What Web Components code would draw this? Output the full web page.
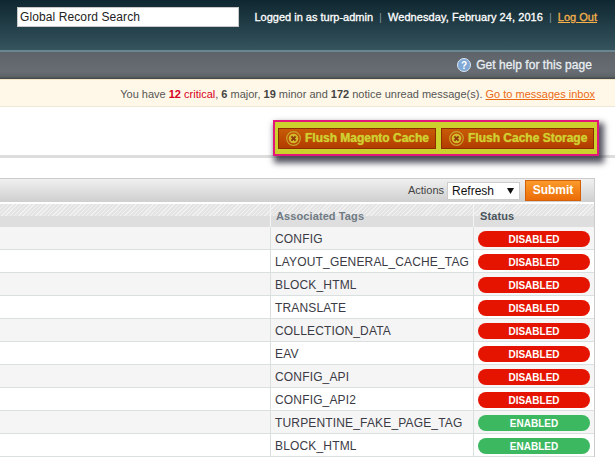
<!DOCTYPE html>
<html><head><meta charset="utf-8"><style>
html,body{margin:0;padding:0;background:#fff;overflow:hidden;height:465px}
body{font:12px/16px "Liberation Sans",Arial,sans-serif}
</style></head><body>
<admin-page></admin-page>
<script>
const svgX=`<svg width="15" height="15" viewBox="0 0 15 15"><circle cx="7.5" cy="7.5" r="6.8" fill="none" stroke="#c9a52a" stroke-width="1.2"/><circle cx="7.5" cy="7.5" r="4.8" fill="#d3bb2c"/><path d="M5.4 5.4l4.2 4.2M9.6 5.4l-4.2 4.2" stroke="#8e3a0c" stroke-width="2"/></svg>`;
function def(name,css,html){
  customElements.define(name,class extends HTMLElement{constructor(){super();this.attachShadow({mode:'open'}).innerHTML=`<style>${css}</style>${typeof html==='function'?html(this):html}`;}});
}
def('top-header',`
:host{display:flex;align-items:flex-start;box-sizing:border-box;height:50px;padding:7px 18px 0 17px;background:linear-gradient(#0f2730,#35545e);color:#fff;font-size:11px;-webkit-text-stroke:.3px #fff}
.search{box-sizing:border-box;flex:none;width:222px;height:20px;background:#fff;border:1px solid #c8c8c8;color:#222;font-size:12px;line-height:18px;padding-left:2px;letter-spacing:.1px;-webkit-text-stroke:0}
.info{line-height:20px;white-space:nowrap;flex:1;display:flex;justify-content:flex-end}
.d{letter-spacing:.07px}
i{font-style:normal;color:#7d949c;margin:0 6px;-webkit-text-stroke:0}
a{color:#f6b14a;text-decoration:underline;-webkit-text-stroke:.3px #f6b14a}
`,`<div class="search">Global Record Search</div><div class="info"><span>Logged in as turp-admin</span><i>|</i><span class="d">Wednesday, February 24, 2016</span><i>|</i><a>Log Out</a></div>`);
def('help-bar',`
:host{display:flex;justify-content:flex-end;align-items:center;gap:5px;box-sizing:border-box;height:30px;padding:0 23px 2px 0;border-top:2px solid #6a8791;border-bottom:1px solid #f2e5c8;background:linear-gradient(#5d6369 0,#676d73 70%,#5f6468 90%,#3f4447 100%);color:#e9eef2;font-size:12px;letter-spacing:.05px;-webkit-text-stroke:.3px #e9eef2}
svg{display:block}
`,`<svg width="14" height="14" viewBox="0 0 14 14"><circle cx="7" cy="7" r="6.5" fill="#7fa8d6" stroke="#dbe7f3"/><text x="7" y="10.6" text-anchor="middle" fill="#fff" stroke="none" font-family="Liberation Sans" font-weight="bold" font-size="10">?</text></svg><span>Get help for this page</span>`);
def('notice-bar',`
:host{display:block;box-sizing:border-box;height:27px;padding:0 20px 0 0;background:#fff8e8;border-bottom:1px solid #eee7d5;color:#555;font-size:11px;line-height:28px;text-align:right;white-space:nowrap}
b.r{color:#d6001c}span.r{color:#d6001c}b{color:#444}
a{color:#ea6a14;text-decoration:underline}
`,`You have <b class="r">12</b> <span class="r">critical</span>, <b>6</b> major, <b>19</b> minor and <b>172</b> notice unread message(s). <a>Go to messages inbox</a>`);
def('flush-btn',`
:host{display:flex;align-items:center;gap:4px;box-sizing:border-box;height:21px;padding:0 7px 1px;background:linear-gradient(#c75b06,#b33c00);border:1px solid #8c2d00;color:#d0cf30;font-weight:bold;font-size:12px;white-space:nowrap;text-shadow:0 0 1px #cfcf30}
svg{display:block;flex:none}
`,`${svgX}<span><slot></slot></span>`);
def('flush-box',`
:host{display:flex;gap:5px;box-sizing:border-box;height:36px;padding:6px 3px 0;margin:0 16px -1px 0;background:#cdd12e;border:2px solid #e3177a;box-shadow:3px 5px 6px 2px rgba(30,30,45,.75);position:relative;z-index:1}
`,`<slot></slot>`);
def('content-head',`
:host{display:flex;justify-content:flex-end;align-items:flex-end;box-sizing:border-box;height:51px;padding:0;border-bottom:3px solid #ddd}
`,`<slot></slot>`);
def('grid-toolbar',`
:host{display:flex;justify-content:flex-end;align-items:center;box-sizing:border-box;height:26px;padding:0 13px 0 0;border-top:1px solid #ccc;border-bottom:2px solid #fff;background:linear-gradient(#f0f0f0,#cfcfcf);color:#444;font-size:11px}
.act{margin-bottom:2px}
.sel{box-sizing:border-box;display:flex;align-items:center;justify-content:space-between;width:73px;height:18px;margin-left:3px;background:#fff;border:1px solid #ccc;padding:0 5px 0 4px;color:#111;font-size:12px}
.sel svg{display:block}
.sub{box-sizing:border-box;display:block;width:56px;height:21px;margin-left:5px;text-align:center;line-height:19px;background:linear-gradient(#fb9a2a,#ec6c08);border:1px solid #d35f08;color:#fff;font-weight:bold;font-size:12px}
`,`<span class="act">Actions</span><span class="sel">Refresh<svg width="7" height="6" viewBox="0 0 7 6"><path d="M0 0h7L3.5 6z" fill="#111"/></svg></span><span class="sub">Submit</span>`);
def('cache-row',`
:host{display:grid;grid-template-columns:271px 203px 120px;box-sizing:border-box;height:23px;border-bottom:1px solid #dadfe0;background:#fff;color:#3b3b45;font-size:12px;line-height:24px}
:host(.alt){background:#f5f5f5}
.c{box-sizing:border-box;border-right:1px solid #dadfe0;white-space:nowrap;overflow:hidden}
.t{padding-left:4px;letter-spacing:.16px}
.s{padding:4px 4px 0;border-right:0}
.b{height:16px;border-radius:8px;background:#e51400;color:#fff;font-size:10px;font-weight:bold;line-height:17px;text-align:center}
.on{background:#3cb861}
`,(h)=>{const s=h.getAttribute('status');return `<div class="c"></div><div class="c t">${h.getAttribute('tag')}</div><div class="c s"><div class="b ${s==='ENABLED'?'on':''}">${s}</div></div>`});
def('grid-head',`
:host{display:grid;grid-template-columns:271px 203px 120px;box-sizing:border-box;height:23px;background:linear-gradient(#0000 0,#0000 12px,#dedede 12px),repeating-linear-gradient(135deg,#f1f1f1 0 1px,#e4e4e4 1px 3px);font-weight:bold;font-size:11px;line-height:24px;letter-spacing:.1px}
.c{box-sizing:border-box;border-right:1px solid #f4f4f4;padding-left:5px}
.t{color:#6f7a84}
.s{color:#4a545c;padding-left:6px;border-right:0}
`,`<div class="c"></div><div class="c t">Associated Tags</div><div class="c s">Status</div>`);
def('cache-grid',`
:host{display:block;box-sizing:border-box;width:595px;margin-top:20px;border-right:1px solid #ccc}
`,`<slot></slot>`);
def('admin-page',`:host{display:block;width:615px}`,()=>{
 const rows=[['CONFIG','DISABLED'],['LAYOUT_GENERAL_CACHE_TAG','DISABLED'],['BLOCK_HTML','DISABLED'],['TRANSLATE','DISABLED'],['COLLECTION_DATA','DISABLED'],['EAV','DISABLED'],['CONFIG_API','DISABLED'],['CONFIG_API2','DISABLED'],['TURPENTINE_FAKE_PAGE_TAG','ENABLED'],['BLOCK_HTML','ENABLED']];
 return `<top-header></top-header><help-bar></help-bar><notice-bar></notice-bar>
 <content-head><flush-box><flush-btn style="width:158px">Flush Magento Cache</flush-btn><flush-btn style="width:153px">Flush Cache Storage</flush-btn></flush-box></content-head>
 <cache-grid><grid-toolbar></grid-toolbar><grid-head></grid-head>${rows.map((r,i)=>`<cache-row class="${i%2?'':'alt'}" tag="${r[0]}" status="${r[1]}"></cache-row>`).join('')}</cache-grid>`;
});
</script>
</body></html>
